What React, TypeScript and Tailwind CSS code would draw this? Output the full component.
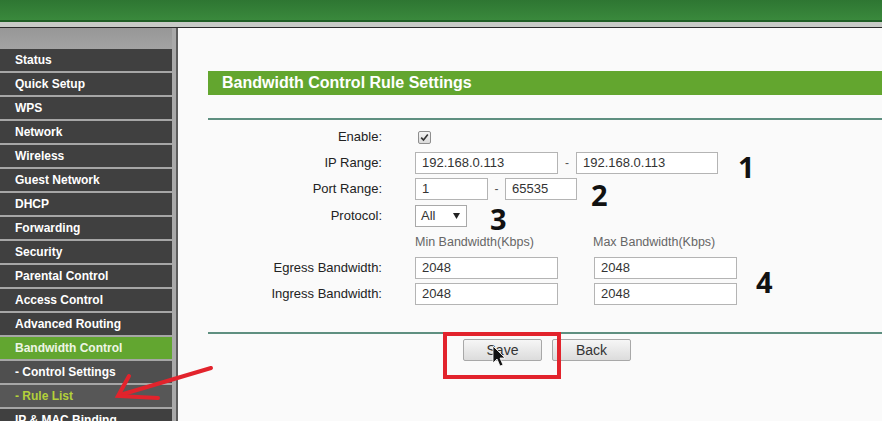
import React from 'react';

type MenuItem = { label: string; kind?: 'active' | 'sub' | 'current' };

const MENU: MenuItem[] = [
  { label: 'Status' },
  { label: 'Quick Setup' },
  { label: 'WPS' },
  { label: 'Network' },
  { label: 'Wireless' },
  { label: 'Guest Network' },
  { label: 'DHCP' },
  { label: 'Forwarding' },
  { label: 'Security' },
  { label: 'Parental Control' },
  { label: 'Access Control' },
  { label: 'Advanced Routing' },
  { label: 'Bandwidth Control', kind: 'active' },
  { label: '- Control Settings', kind: 'sub' },
  { label: '- Rule List', kind: 'current' },
  { label: 'IP & MAC Binding' },
];

const rowBg = (kind?: MenuItem['kind']) => {
  if (kind === 'active') return 'bg-[#62a630] text-[#eef5e4]';
  if (kind === 'sub') return 'bg-[#4f4f4f] text-white';
  if (kind === 'current') return 'bg-[#575757] text-[#b3d13a]';
  return 'bg-[#404040] text-white';
};

const TextBox = ({ value, width }: { value: string; width: string }) => (
  <div
    className={`${width} h-[22px] border border-[#b4b4b4] bg-white pl-[6px] text-[13px] leading-[20px] text-[#333]`}
  >
    {value}
  </div>
);

const Label = ({ children }: { children: React.ReactNode }) => (
  <span className="w-[174px] shrink-0 text-right text-[13px] text-[#222]">{children}</span>
);

const Marker = ({ children, className }: { children: React.ReactNode; className: string }) => (
  <span className={`font-['Open_Sans',sans-serif] text-[29px] font-bold leading-none text-[#111] ${className}`}>
    {children}
  </span>
);

const Button = ({ children }: { children: React.ReactNode }) => (
  <button className="h-[22px] w-[79px] rounded-[2px] border border-[#a8a8a8] bg-gradient-to-b from-[#f6f6f6] to-[#dcdcdc] text-[14px] leading-[20px] text-[#333]">
    {children}
  </button>
);

export default function App() {
  return (
    <div className="relative h-[421px] w-[882px] overflow-hidden bg-[#fafafa] font-['Liberation_Sans',Arial,sans-serif]">
      {/* header strip */}
      <div className="h-[20px] bg-gradient-to-b from-[#2e7632] to-[#3a893c]" />
      <div className="h-[2px] bg-[#1f5e25]" />
      <div className="h-[5px] bg-[#c8cbc7]" />
      <div className="h-px bg-[#2a2a2a]" />

      <div className="flex">
        <aside className="w-[172px] shrink-0 bg-[#a6a6a6]">
          <div className="h-[21px] bg-gradient-to-b from-[#979797] to-[#a3a3a3]" />
          {MENU.map((item) => (
            <div
              key={item.label}
              className={`mb-[2px] flex h-[22px] items-center pl-[15px] text-[12px] font-bold ${rowBg(item.kind)}`}
            >
              {item.label}
            </div>
          ))}
        </aside>
        <div className="w-[4px] shrink-0 bg-[#a9a9a9]" />
        <div className="w-[2px] shrink-0 bg-[#5c5c5c]" />

        <main className="flex-1 pl-[30px] pt-[43px]">
          <div className="flex h-[24px] items-center bg-[#63a62f] pl-[14px] text-[16px] font-bold text-white">
            Bandwidth Control Rule Settings
          </div>
          <div className="mt-[23px] h-[2px] bg-[#5e8f80]" />

          <div className="mt-[6px] flex flex-col">
            <div className="flex h-[22px] items-center">
              <Label>Enable:</Label>
              <span className="ml-[36px] flex h-[13px] w-[13px] items-center justify-center rounded-[2px] border border-[#8e8e8e] bg-gradient-to-b from-[#f5f5f5] to-[#dadada]">
                <svg width="9" height="9" viewBox="0 0 9 9">
                  <path d="M1.2 4.6 L3.5 7 L7.8 1.6" fill="none" stroke="#333" strokeWidth="1.6" />
                </svg>
              </span>
            </div>

            <div className="mt-[4px] flex h-[22px] items-center">
              <Label>IP Range:</Label>
              <div className="ml-[33px] flex items-center">
                <TextBox value="192.168.0.113" width="w-[143px]" />
                <span className="w-[18px] text-center text-[12px] text-[#555]">-</span>
                <TextBox value="192.168.0.113" width="w-[142px]" />
                <Marker className="ml-[20px] mt-[6px]">1</Marker>
              </div>
            </div>

            <div className="mt-[4px] flex h-[22px] items-center">
              <Label>Port Range:</Label>
              <div className="ml-[33px] flex items-center">
                <TextBox value="1" width="w-[73px]" />
                <span className="w-[17px] text-center text-[12px] text-[#555]">-</span>
                <TextBox value="65535" width="w-[72px]" />
                <Marker className="ml-[14px] mt-[10px]">2</Marker>
              </div>
            </div>

            <div className="mt-[5px] flex h-[22px] items-center">
              <Label>Protocol:</Label>
              <div className="ml-[33px] flex items-center">
                <div className="flex h-[22px] w-[52px] items-center justify-between border border-[#a9a9a9] bg-white pl-[5px] pr-[6px] text-[13px] text-[#333]">
                  <span>All</span>
                  <svg width="7" height="6" viewBox="0 0 7 6">
                    <path d="M0 0 H7 L3.5 6 Z" fill="#222" />
                  </svg>
                </div>
                <Marker className="ml-[23px] mt-[4px]">3</Marker>
              </div>
            </div>

            <div className="mt-[6px] flex h-[18px] items-center text-[12.5px] text-[#666]">
              <span className="w-[174px] shrink-0" />
              <span className="ml-[33px] w-[178px]">Min Bandwidth(Kbps)</span>
              <span>Max Bandwidth(Kbps)</span>
            </div>

            <div className="mt-[6px] flex items-center">
              <div className="flex flex-col gap-[4px]">
                <div className="flex h-[22px] items-center">
                  <Label>Egress Bandwidth:</Label>
                  <div className="ml-[33px] flex gap-[36px]">
                    <TextBox value="2048" width="w-[143px]" />
                    <TextBox value="2048" width="w-[143px]" />
                  </div>
                </div>
                <div className="flex h-[22px] items-center">
                  <Label>Ingress Bandwidth:</Label>
                  <div className="ml-[33px] flex gap-[36px]">
                    <TextBox value="2048" width="w-[143px]" />
                    <TextBox value="2048" width="w-[143px]" />
                  </div>
                </div>
              </div>
              <Marker className="ml-[19px]">4</Marker>
            </div>
          </div>

          <div className="mt-[27px] h-[2px] bg-[#5e8f80]" />
          <div className="mt-[5px] flex gap-[10px] pl-[255px]">
            <Button>Save</Button>
            <Button>Back</Button>
          </div>
        </main>
      </div>

      {/* red call-outs and mouse pointer drawn on top */}
      <svg
        className="pointer-events-none absolute left-0 top-0"
        width="882"
        height="421"
        viewBox="0 0 882 421"
      >
        <rect x="445" y="334" width="114" height="43" fill="none" stroke="#e2232c" strokeWidth="4" />
        <g stroke="#e2232c" strokeWidth="4" strokeLinecap="round" fill="none">
          <path d="M211 368 L120 395" />
          <path d="M129 376 L118 396 L158 398" />
        </g>
        <path
          d="M493 346 L493 363 L497 359 L500 366 L503 365 L500 358 L505 358 Z"
          fill="#111"
          stroke="#fff"
          strokeWidth="0.8"
        />
      </svg>
    </div>
  );
}
